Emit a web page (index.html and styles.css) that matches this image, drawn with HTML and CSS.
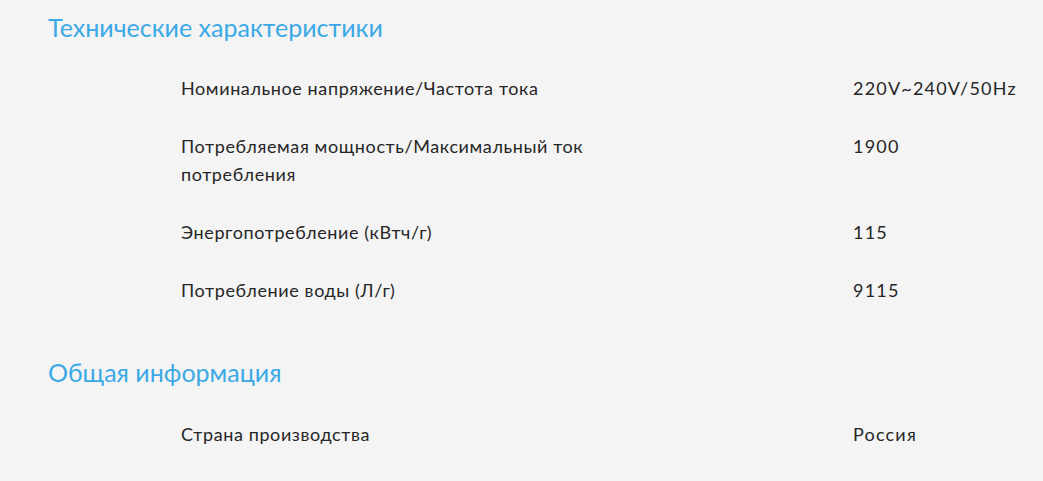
FILE: index.html
```html
<!DOCTYPE html>
<html lang="ru">
<head>
<meta charset="utf-8">
<link rel="stylesheet" href="styles.css">
</head>
<body>
<div class="page">
  <section class="section">
    <h2 class="title">Технические характеристики</h2>
    <div class="row"><div class="label">Номинальное напряжение/Частота тока</div><div class="value">220V~240V/50Hz</div></div>
    <div class="row"><div class="label">Потребляемая мощность/Максимальный ток потребления</div><div class="value">1900</div></div>
    <div class="row"><div class="label">Энергопотребление (кВтч/г)</div><div class="value">115</div></div>
    <div class="row"><div class="label">Потребление воды (Л/г)</div><div class="value">9115</div></div>
  </section>
  <section class="section second">
    <h2 class="title">Общая информация</h2>
    <div class="row"><div class="label">Страна производства</div><div class="value">Россия</div></div>
  </section>
</div>
</body>
</html>
```
FILE: styles.css
```css
html, body {
  margin: 0;
  padding: 0;
  background: #f4f4f4;
}
.page {
  padding: 12px 0 0 48px;
  font-family: Lato, "Noto Sans", sans-serif;
  color: #262626;
}
.title {
  margin: 0 0 17px 0;
  font-size: 25px;
  line-height: 30px;
  font-weight: 400;
  color: #3ba9e6;
}
.second {
  margin-top: 38px;
}
.second .title {
  margin-bottom: 18px;
}
.row {
  display: grid;
  grid-template-columns: 672px 1fr;
  padding: 15px 0 15px 133px;
  font-size: 18px;
  line-height: 28px;
  letter-spacing: 0.6px;
}
.value {
  letter-spacing: 1.2px;
}
.label {
  max-width: 410px;
}
```
